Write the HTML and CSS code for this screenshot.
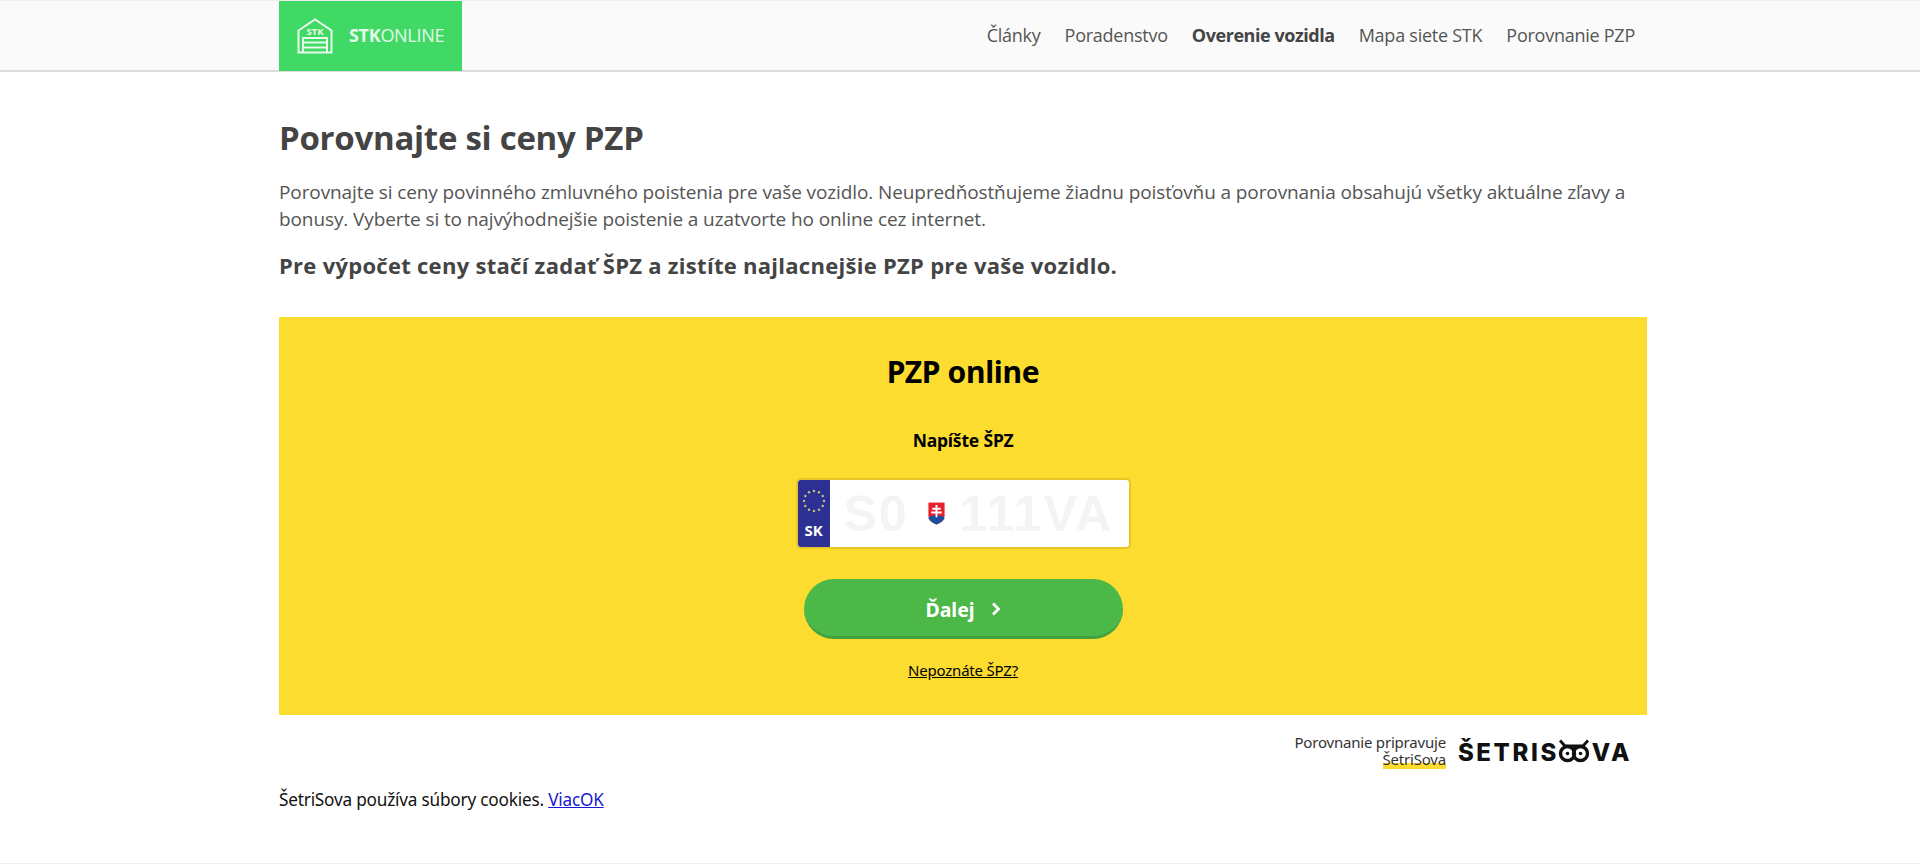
FILE: index.html
```html
<!DOCTYPE html>
<html lang="sk">
<head>
    <meta charset="UTF-8">
    <meta name="viewport" content="width=device-width, initial-scale=1.0">
    <title>Porovnajte si ceny PZP</title>
    <link rel="stylesheet" href="styles.css">
</head>
<body>
    <header class="topbar">
        <div class="wrap topbar_in">
            <a class="logo" href="#">
                <svg class="logo_icon" viewBox="0 0 36 36" width="36" height="36" fill="none" stroke="#e6fbe9" stroke-width="2">
                    <path d="M1.500 34.500V12.500L18 1.500l16.500 11v22z"/>
                    <path d="M6 34.500V20h24v14.500M6 24.500h24M6 29.500h24"/>
                    <text x="18" y="17" class="logo_stk">STK</text>
                </svg>
                <span class="logo_txt"><b>STK</b>ONLINE</span>
            </a>
            <nav class="menu">
                <a href="#">Články</a>
                <a href="#">Poradenstvo</a>
                <a href="#" class="active">Overenie vozidla</a>
                <a href="#">Mapa siete STK</a>
                <a href="#">Porovnanie PZP</a>
            </nav>
        </div>
    </header>

    <main class="wrap">
        <h1>Porovnajte si ceny PZP</h1>
        <p class="intro">Porovnajte si ceny povinného zmluvného poistenia pre vaše vozidlo. Neupredňostňujeme žiadnu poisťovňu a porovnania obsahujú všetky aktuálne zľavy a bonusy. Vyberte si to najvýhodnejšie poistenie a uzatvorte ho online cez internet.</p>
        <p class="lead">Pre výpočet ceny stačí zadať ŠPZ a zistíte najlacnejšie PZP pre vaše vozidlo.</p>

        <section class="box">
            <h2>PZP online</h2>
            <div class="box_label">Napíšte ŠPZ</div>
            <div class="plate">
                <div class="plate_eu">
                    <svg viewBox="0 0 24 24" width="24" height="24" fill="#c9c27a">
                        <circle cx="12" cy="2" r="1.200"/><circle cx="17" cy="3.300" r="1.200"/><circle cx="20.700" cy="7" r="1.200"/>
                        <circle cx="22" cy="12" r="1.200"/><circle cx="20.700" cy="17" r="1.200"/><circle cx="17" cy="20.700" r="1.200"/>
                        <circle cx="12" cy="22" r="1.200"/><circle cx="7" cy="20.700" r="1.200"/><circle cx="3.300" cy="17" r="1.200"/>
                        <circle cx="2" cy="12" r="1.200"/><circle cx="3.300" cy="7" r="1.200"/><circle cx="7" cy="3.300" r="1.200"/>
                    </svg>
                    <span>SK</span>
                </div>
                <div class="plate_num">
                    <span class="plate_a">S0</span>
                    <svg class="shield" viewBox="0 0 20 26" width="19" height="25">
                        <path d="M1 1h18v14c0 5-4 8-9 10C5 23 1 20 1 15z" fill="#e8202e" stroke="#fff" stroke-width="1"/>
                        <path d="M1.500 18c2-3 4-3 5.500-2 1-2.500 5-2.500 6 0 1.500-1 3.500-1 5.500 2-1.500 3-4.500 5-8.500 6.500C6 23 3 21 1.500 18z" fill="#1b50a0"/>
                        <path d="M9 4h2v3h3.500v2H11v2h4.500v2H11v4H9v-4H4.500v-2H9V9H5.500V7H9z" fill="#fff"/>
                    </svg>
                    <span class="plate_b">111VA</span>
                </div>
            </div>
            <a href="#" class="btn">Ďalej
                <svg viewBox="0 0 10 14" width="10" height="14" fill="none" stroke="#fff" stroke-width="2.800"><path d="M2 1.500 7.500 7 2 12.500"/></svg>
            </a>
            <a href="#" class="box_link">Nepoznáte ŠPZ?</a>
        </section>

        <div class="sova">
            <div class="sova_txt">Porovnanie pripravuje<br><span class="sova_mark">ŠetriSova</span></div>
            <div class="sova_logo">ŠETRIS<svg class="owl" viewBox="0 0 32 24" width="32" height="24" fill="none" stroke="#111" stroke-width="3.400">
                    <path d="M2 1.500 7 7h18l5-5.500" stroke-width="2.800"/>
                    <circle cx="9.500" cy="14.500" r="7"/><circle cx="22.500" cy="14.500" r="7"/>
                    <circle cx="9.500" cy="14.500" r="1.800" fill="#111" stroke="none"/><circle cx="22.500" cy="14.500" r="1.800" fill="#111" stroke="none"/>
                </svg>VA</div>
        </div>

        <div class="cookies">ŠetriSova používa súbory cookies. <a href="#">Viac</a><a href="#">OK</a></div>
    </main>
</body>
</html>
```

FILE: styles.css
```css
* {
    box-sizing: border-box;
}
body {
    margin: 0;
    height: 864px;
    overflow: hidden;
    background: #fff;
    border-top: 1px solid #efefef;
    border-bottom: 1px solid #efefef;
    font-family: "Open Sans", "Noto Sans", sans-serif;
    color: #444;
}
.wrap {
    width: 1368px;
    margin-left: 279px;
}
.topbar {
    height: 71px;
    background: #fafafa;
    border-bottom: 2px solid #dedede;
}
.topbar_in {
    display: flex;
    justify-content: space-between;
    height: 70px;
}
.logo {
    width: 183px;
    height: 71px;
    margin-top: -1px;
    background: #41d966;
    display: flex;
    align-items: center;
    padding-left: 18px;
    gap: 16px;
    text-decoration: none;
    color: #e6fbe9;
}
.logo_icon {
    flex: none;
}
.logo_stk {
    font-size: 9.500px;
    font-weight: 700;
    text-anchor: middle;
    fill: #e6fbe9;
    stroke: none;
}
.logo_txt {
    margin-bottom: 1px;
    font-size: 18px;
    letter-spacing: -0.3px;
}
.menu {
    display: flex;
    align-items: center;
    gap: 24px;
    padding: 0 12px 2px 0;
}
.menu a {
    font-size: 18px;
    letter-spacing: -0.25px;
    color: #555;
    text-decoration: none;
}
.menu a.active {
    font-weight: 700;
    letter-spacing: -0.45px;
    color: #444;
}
h1 {
    margin: 46px 0 0;
    font-size: 33px;
    line-height: 40px;
    font-weight: 700;
    letter-spacing: -0.27px;
    color: #444;
}
.intro {
    margin: 21px 0 0;
    font-size: 19px;
    line-height: 27px;
    letter-spacing: -0.105px;
    color: #555;
}
.lead {
    margin: 18px 0 0;
    font-size: 22px;
    line-height: 28px;
    font-weight: 700;
    letter-spacing: 0.28px;
    color: #444;
}
.box {
    margin-top: 38px;
    height: 398px;
    background: #fddc30;
    display: flex;
    flex-direction: column;
    align-items: center;
    color: #000;
    font-family: "Noto Sans", sans-serif;
}
.box h2 {
    margin: 37px 0 0;
    font-size: 30px;
    line-height: 36px;
    font-weight: 700;
    letter-spacing: -0.3px;
}
.box_label {
    margin-top: 38px;
    font-size: 17.500px;
    line-height: 24px;
    font-weight: 700;
    letter-spacing: -0.2px;
}
.plate {
    margin-top: 26px;
    width: 335px;
    height: 71px;
    display: flex;
    background: #fff;
    border: 2px solid #e8c627;
    border-radius: 5px;
    overflow: hidden;
}
.plate_eu {
    width: 32px;
    background: #2c3092;
    display: flex;
    flex-direction: column;
    align-items: center;
    padding-top: 9px;
    color: #fff;
    font: 700 15px/18px "Noto Sans", sans-serif;
}
.plate_eu span {
    margin-top: 8px;
}
.plate_num {
    flex: 1;
    display: flex;
    align-items: center;
    padding-left: 14px;
    font: 700 50px/1 "Liberation Sans", sans-serif;
    letter-spacing: 2px;
    color: #f4f4f4;
}
.plate_a {
    width: 83px;
}
.shield {
    flex: none;
}
.plate_b {
    margin-left: 14px;
}
.btn {
    margin-top: 30px;
    width: 319px;
    height: 60px;
    padding-top: 3px;
    border-radius: 30px;
    background: #4bb848;
    border-bottom: 3px solid #3fa23e;
    display: flex;
    align-items: center;
    justify-content: center;
    gap: 16px;
    color: #fff;
    font-size: 19.500px;
    font-weight: 700;
    text-decoration: none;
}
.box_link {
    margin-top: 21px;
    font-size: 15px;
    line-height: 20px;
    letter-spacing: -0.2px;
    color: #000;
}
.sova {
    margin-top: 18px;
    display: flex;
    justify-content: flex-end;
    align-items: center;
    gap: 12px;
    padding-right: 15px;
    font-family: "Noto Sans", sans-serif;
    color: #333;
}
.sova_txt {
    text-align: right;
    font-size: 15px;
    line-height: 17px;
    letter-spacing: -0.2px;
}
.sova_mark {
    background: linear-gradient(transparent 72%, #fddc30 72%);
}
.sova_logo {
    display: flex;
    align-items: center;
    margin-top: 5px;
    font-family: Inter, "Noto Sans", sans-serif;
    font-size: 24px;
    line-height: 30px;
    font-weight: 800;
    letter-spacing: 2.600px;
    color: #111;
}
.owl {
    margin: -4px 2px 0 -1px;
}
.cookies {
    margin-top: 20px;
    font-family: "Noto Sans", sans-serif;
    font-size: 17.200px;
    line-height: 24px;
    letter-spacing: -0.2px;
    color: #111;
}
.cookies a {
    color: #1a1ad0;
}
```
